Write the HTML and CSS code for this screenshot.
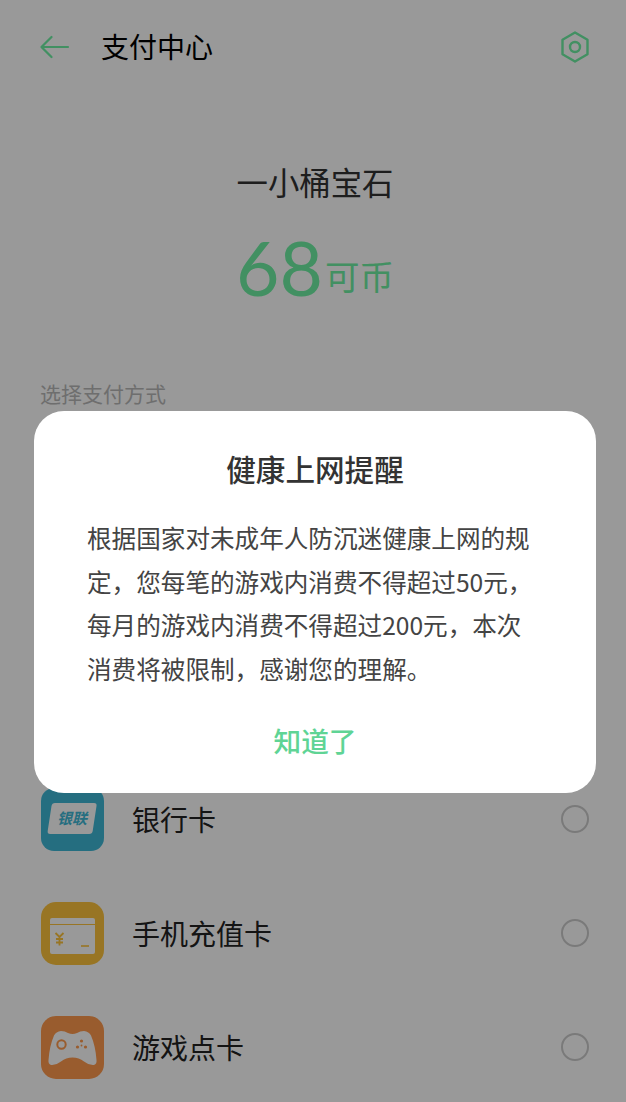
FILE: index.html
```html
<!DOCTYPE html>
<html lang="zh-CN">
<head>
<meta charset="utf-8">
<title>支付中心</title>
<link rel="stylesheet" href="styles.css">
</head>
<body>
<main class="page">
  <header class="topbar">
    <svg class="back" viewBox="0 0 30 24" width="30" height="24" fill="none" stroke="#6ef0a4" stroke-width="2.2" stroke-linecap="round" stroke-linejoin="round"><path d="M28 12H1.500M11.500 2 1.500 12l10 10"/></svg>
    <h1 class="title">支付中心</h1>
    <svg class="gear" viewBox="0 0 30 32" width="30" height="32" fill="none" stroke="#6ef0a4" stroke-width="2.4" stroke-linejoin="round"><path d="M15 1.500 27.500 8.700v14.600L15 30.500 2.500 23.300V8.700Z"/><circle cx="15" cy="16" r="5"/></svg>
  </header>
  <section class="product">
    <div class="product-name">一小桶宝石</div>
    <div class="price"><span class="price-num">68</span><span class="price-unit">可币</span></div>
  </section>
  <div class="section-label">选择支付方式</div>
  <ul class="methods">
    <li class="method">
      <svg class="method-icon" viewBox="0 0 63 63" width="63" height="63">
        <rect width="63" height="63" rx="13" fill="#3fb8d6"/>
        <path d="M10.500 18q.5-3 3.500-3h39q3 0 2.500 3l-3.800 25q-.5 3-3.500 3h-39q-3 0-2.500-3Z" fill="#fff"/>
        <text class="unionpay" x="31" y="36" text-anchor="middle">银联</text>
      </svg>
      <span class="method-name">银行卡</span><span class="radio"></span>
    </li>
    <li class="method">
      <svg class="method-icon" viewBox="0 0 63 63" width="63" height="63">
        <rect width="63" height="63" rx="15" fill="#fdc33c"/>
        <rect x="9" y="16" width="45" height="36" rx="2" fill="#fff"/>
        <path d="M9 22.500h45" stroke="#fdc33c" stroke-width="1.200"/>
        <path d="M14.500 31l4 4 4-4M18.500 35v8.500M15 37h7M15 40.500h7" stroke="#fdc33c" stroke-width="1.800" fill="none"/>
        <path d="M40 44h8" stroke="#fdc33c" stroke-width="1.600"/>
      </svg>
      <span class="method-name">手机充值卡</span><span class="radio"></span>
    </li>
    <li class="method">
      <svg class="method-icon" viewBox="0 0 63 63" width="63" height="63">
        <rect width="63" height="63" rx="15" fill="#ff9a4d"/>
        <path d="M7.500 44q-.5 4 2.500 5 5 .5 10-3.500 5-4 11.500-4t11.500 4q5 4 10 3.500 3-1 2.500-5-1-14-5.500-24.500-2-4-7-4.500-4 0-7 2-4.500 2-9 0-3-2-7-2-5 .5-7 4.500-4.500 10.500-5.500 24.500Z" fill="#fff"/>
        <circle cx="20.500" cy="28.500" r="4.200" fill="none" stroke="#ff9a4d" stroke-width="2"/>
        <g fill="#ff9a4d"><circle cx="40.500" cy="25" r="1.600"/><circle cx="36.500" cy="31" r="1.600"/><circle cx="44.500" cy="31" r="1.600"/><circle cx="40.500" cy="29.500" r=".9"/></g>
      </svg>
      <span class="method-name">游戏点卡</span><span class="radio"></span>
    </li>
  </ul>
</main>
<div class="scrim"></div>
<div class="dialog">
  <h2 class="dialog-title">健康上网提醒</h2>
  <p class="dialog-body">根据国家对未成年人防沉迷健康上网的规定，您每笔的游戏内消费不得超过50元，每月的游戏内消费不得超过200元，本次消费将被限制，感谢您的理解。</p>
  <div class="dialog-action">知道了</div>
</div>
</body>
</html>
```
FILE: styles.css
```css
* { box-sizing: border-box; margin: 0; padding: 0; }
html, body { width: 626px; height: 1102px; overflow: hidden; }
body {
  position: relative;
  background: #fff;
  font-family: "Noto Sans CJK SC", "Noto Sans", sans-serif;
  color: #000;
}
.page { display: flex; flex-direction: column; padding: 0 37px 0 41px; }
.topbar { display: flex; align-items: center; height: 94px; }
.back { flex: none; margin-left: -1px; }
.title { flex: 1; margin: -3px 0 0 31px; font-size: 28px; font-weight: 400; line-height: 40px; }
.gear { flex: none; margin-right: -1px; }
.product { display: flex; flex-direction: column; align-items: center; margin-top: 65px; }
.product-name { font-size: 31.400px; line-height: 46px; color: #333; }
.price { margin-top: 17px; height: 90px; line-height: 90px; color: #6ef0a4; white-space: nowrap; }
.price-num { font-family: "Lato", sans-serif; font-size: 75px; }
.price-unit { font-size: 34.500px; margin-left: 2px; vertical-align: 6px; }
.section-label { margin: 66px 0 0 -1px; font-size: 21px; line-height: 30px; color: #b8b8b8; }
.methods { list-style: none; margin-top: 354px; }
.method { display: flex; align-items: center; height: 114px; }
.method-icon { flex: none; }
.unionpay { font: italic 700 15px "Noto Sans CJK SC", sans-serif; fill: #3fb8d6; }
.method-name { flex: 1; margin-left: 28px; font-size: 28px; line-height: 40px; color: #222; }
.radio { flex: none; width: 28px; height: 28px; border: 2px solid #ccc; border-radius: 50%; }
.scrim { position: absolute; inset: 0; background: rgba(0, 0, 0, .4); }
.dialog {
  position: absolute; left: 34px; top: 411px; width: 562px; height: 382px;
  display: flex; flex-direction: column; align-items: center;
  padding: 36px 53px 0;
  background: #fff; border-radius: 30px;
}
.dialog-title { font-size: 29.600px; font-weight: 500; line-height: 44px; color: #333; }
.dialog-body { margin-top: 25px; font-size: 24.600px; line-height: 43.500px; color: #444; }
.dialog-action { margin-top: 30px; font-size: 27.700px; font-weight: 500; line-height: 40px; color: #5fd495; }
```
